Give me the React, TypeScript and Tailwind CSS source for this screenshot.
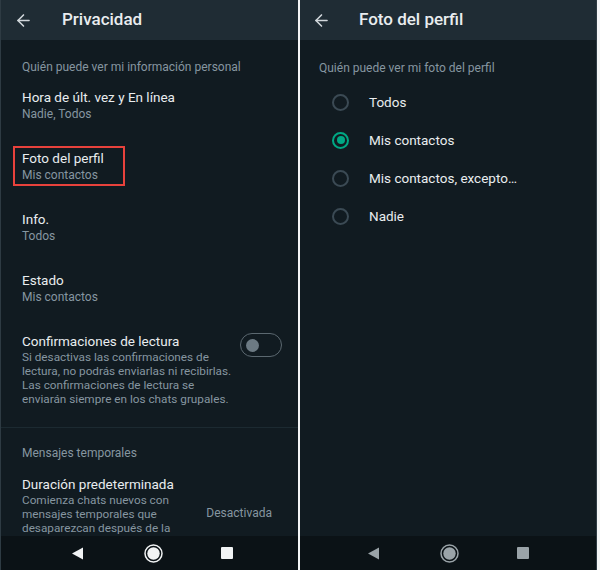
import React from "react";
import { ArrowLeft } from "lucide-react";

type ItemType = {
    title: string;
    sub: string;
};

const style = {
    title: "text-[13.5px] leading-[18px] text-[#e9edef]",
    sub: "text-[12px] leading-[16px] text-[#8696a0]",
    label: "text-[12px] leading-[16px] text-[#8696a0]",
    desc: "whitespace-nowrap text-[11.75px] leading-[14px] text-[#8696a0]",
};

const items: ItemType[] = [
    { title: "Hora de últ. vez y En línea", sub: "Nadie, Todos" },
    { title: "Foto del perfil", sub: "Mis contactos" },
    { title: "Info.", sub: "Todos" },
    { title: "Estado", sub: "Mis contactos" },
];

const options = ["Todos", "Mis contactos", "Mis contactos, excepto…", "Nadie"];

const Header: React.FC<{ title: string; pl: string; gap: string }> = ({ title, pl, gap }) => (
    <div className={`flex h-10 shrink-0 items-center bg-[#1f2c34] ${pl}`}>
        <ArrowLeft size={19} strokeWidth={2} className="text-[#d1d7db]" />
        <div className={`text-[17px] font-medium text-[#e9edef] ${gap}`}>{title}</div>
    </div>
);

const NavBar: React.FC<{ dim?: boolean }> = ({ dim }) => {
    const c = dim ? "#9aa3a8" : "#f1f3f4";
    return (
        <div className={`flex h-[34px] shrink-0 items-center bg-[#0b1216] ${dim ? "pl-[67px]" : "pl-[70px]"}`}>
            <svg width="13" height="13" viewBox="0 0 13 13">
                <path d="M12 0.5 L12 12.5 L1 6.5 Z" fill={c} />
            </svg>
            <svg width="19" height="19" viewBox="0 0 19 19" className="ml-[60px]">
                <circle cx="9.5" cy="9.5" r="8.5" fill="none" stroke={c} strokeWidth="1.5" />
                <circle cx="9.5" cy="9.5" r="6.2" fill={c} />
            </svg>
            <svg width="12" height="12" viewBox="0 0 12 12" className="ml-[58px]">
                <rect x="0" y="0" width="12" height="12" rx="1" fill={c} />
            </svg>
        </div>
    );
};

const Privacy: React.FC = () => (
    <div className="flex h-[570px] w-[298px] flex-col overflow-hidden border-l border-[#2e3b43] bg-[#111b21]">
        <Header title="Privacidad" pl="pl-[13px]" gap="ml-[29px]" />
        <div className="flex-1 overflow-hidden pl-[21px] pt-[19px]">
            <div className={style.label}>Quién puede ver mi información personal</div>
            <div className="mt-[13px] flex flex-col gap-[27px]">
                {items.map((item: ItemType, key: number) =>
                    key === 1 ? (
                        <div
                            key={key}
                            className="-mb-[3px] -ml-[9px] -mt-[3px] w-fit border-2 border-[#e8423c] pb-[1px] pl-[7px] pr-[19px] pt-[1px]"
                        >
                            <div className={style.title}>{item.title}</div>
                            <div className={style.sub}>{item.sub}</div>
                        </div>
                    ) : (
                        <div key={key}>
                            <div className={style.title}>{item.title}</div>
                            <div className={style.sub}>{item.sub}</div>
                        </div>
                    )
                )}
                <div className="flex items-start pr-[16px]">
                    <div className="w-0 flex-1">
                        <div className={style.title}>Confirmaciones de lectura</div>
                        <div className={style.desc}>
                            Si desactivas las confirmaciones de
                            <br />
                            lectura, no podrás enviarlas ni recibirlas.
                            <br />
                            Las confirmaciones de lectura se
                            <br />
                            enviarán siempre en los chats grupales.
                        </div>
                    </div>
                    <div className="mt-[1px] flex h-[24px] w-[42px] shrink-0 items-center rounded-full border-[1.5px] border-[#5b6870] pl-[5px]">
                        <div className="h-[13px] w-[13px] rounded-full bg-[#6c7a83]" />
                    </div>
                </div>
            </div>
            <div className="-ml-[21px] mt-[21px] h-px bg-[#1c2a31]" />
            <div className={`mt-[17px] ${style.label}`}>Mensajes temporales</div>
            <div className="mt-[14px] flex items-center pr-[26px]">
                <div className="flex-1">
                    <div className={style.title}>Duración predeterminada</div>
                    <div className={style.desc}>
                        Comienza chats nuevos con
                        <br />
                        mensajes temporales que
                        <br />
                        desaparezcan después de la
                    </div>
                </div>
                <div className="mt-[16px] text-[12px] text-[#8696a0]">Desactivada</div>
            </div>
        </div>
        <NavBar />
    </div>
);

const ProfilePhoto: React.FC = () => (
    <div className="flex h-[570px] w-[297px] flex-col overflow-hidden border-r border-[#2e3b43] bg-[#111b21]">
        <Header title="Foto del perfil" pl="pl-[12px]" gap="ml-[28px]" />
        <div className="flex-1 overflow-hidden pl-[19px] pt-[20px]">
            <div className={style.label}>Quién puede ver mi foto del perfil</div>
            <div className="mt-[7px] flex flex-col">
                {options.map((opt: string, key: number) => (
                    <div className="flex h-[38px] items-center pl-[13px]" key={opt}>
                        {key === 1 ? (
                            <div className="flex h-[17px] w-[17px] items-center justify-center rounded-full border-2 border-[#00a884]">
                                <div className="h-[8px] w-[8px] rounded-full bg-[#00a884]" />
                            </div>
                        ) : (
                            <div className="h-[17px] w-[17px] rounded-full border-2 border-[#3b4a54]" />
                        )}
                        <div className="ml-[20px] text-[13.5px] text-[#e9edef]">{opt}</div>
                    </div>
                ))}
            </div>
        </div>
        <NavBar dim />
    </div>
);

const App: React.FC = () => {
    return (
        <div
            className="flex h-[570px] w-[600px] gap-[2px] overflow-hidden bg-[#f4f5f6]"
            style={{ fontFamily: "Roboto, 'Noto Sans', sans-serif" }}
        >
            <Privacy />
            <ProfilePhoto />
        </div>
    );
};

export default App;
